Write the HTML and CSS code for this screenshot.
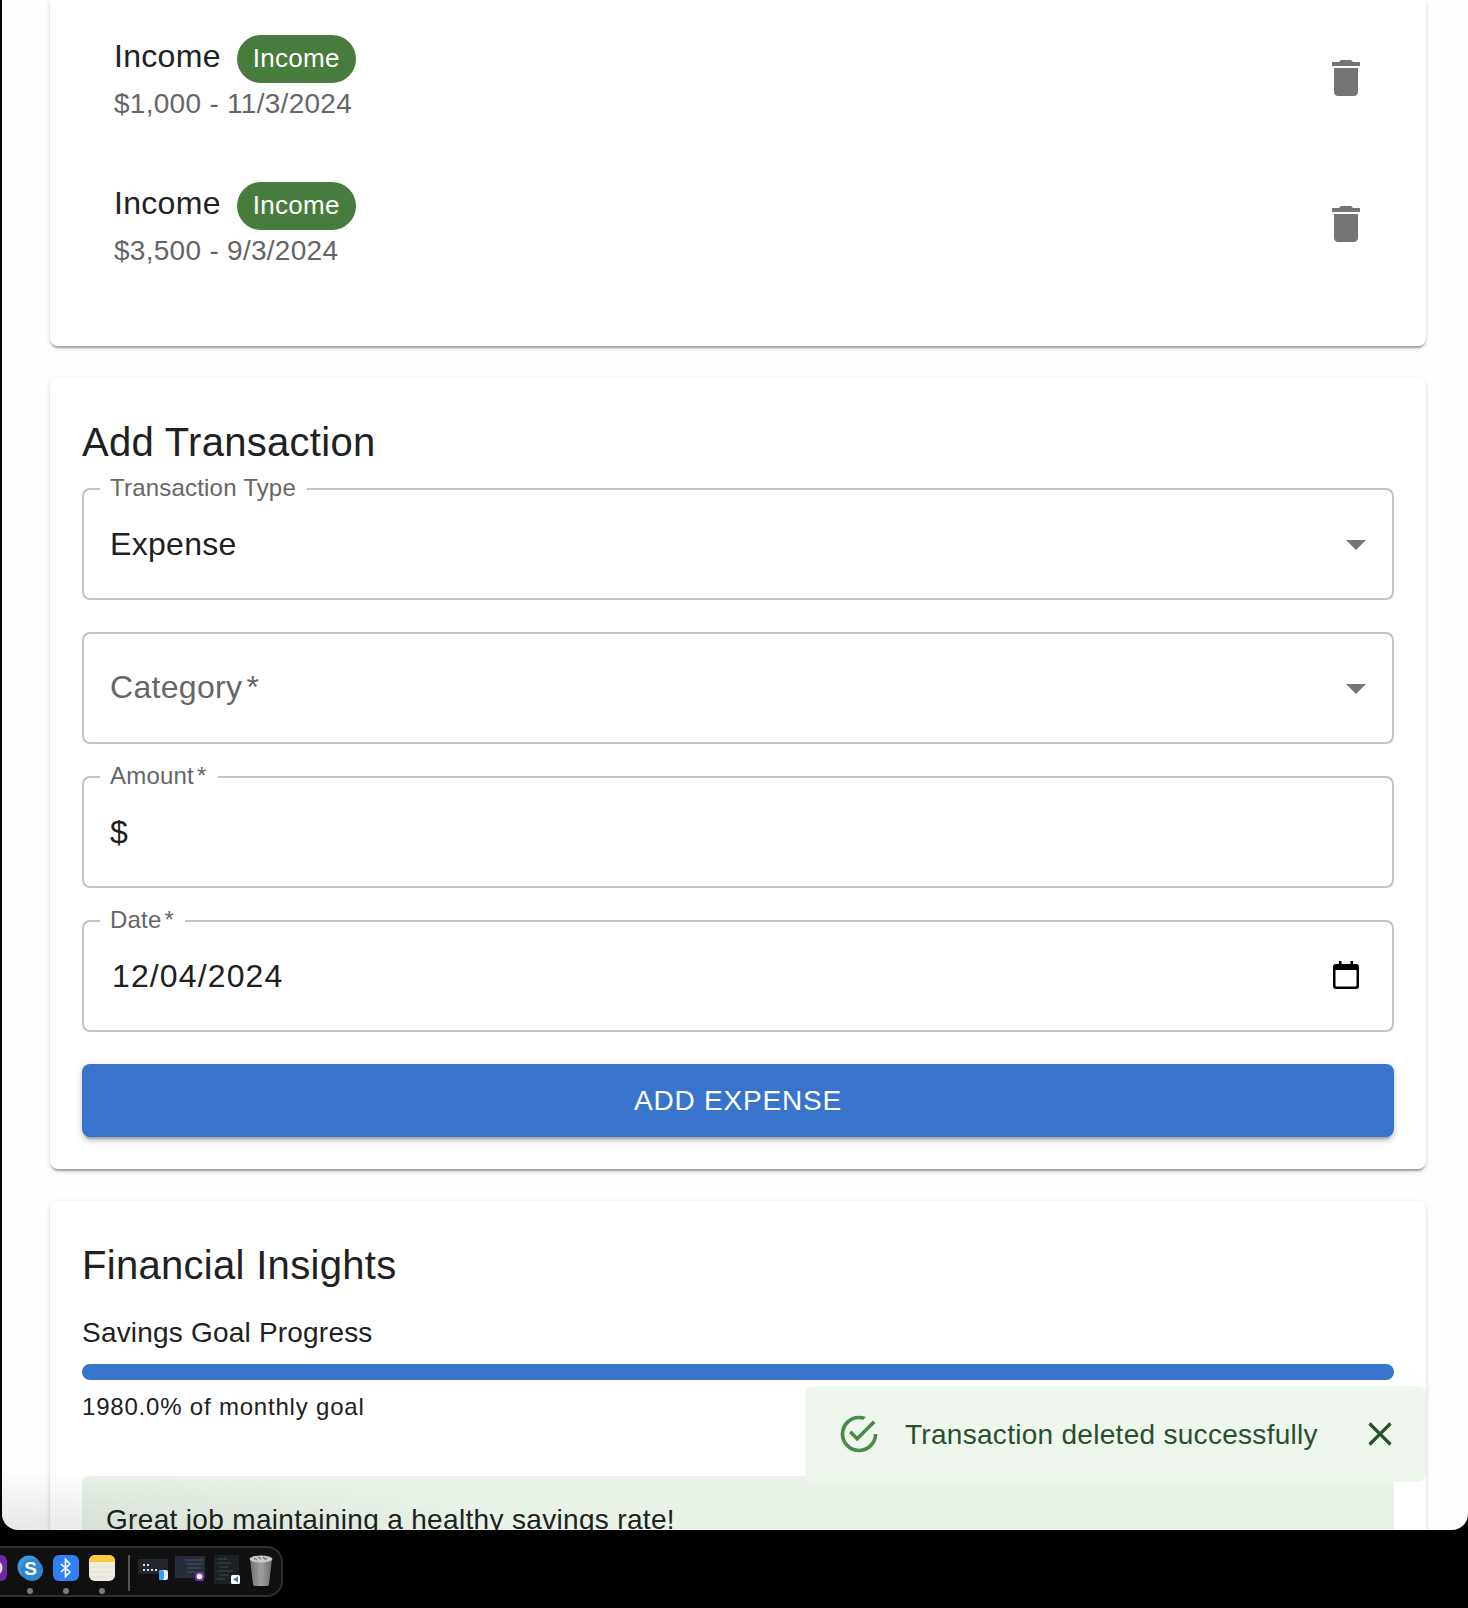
FILE: index.html
```html
<!DOCTYPE html>
<html lang="en">
<head>
    <meta charset="UTF-8">
    <title>Budget</title>
    <link rel="stylesheet" href="styles.css">
</head>
<body>
<div class="window">
    <div class="content">
        <div class="card list-card">
            <div class="item">
                <div class="item-text">
                    <div class="item-title">
                        <span class="item-name">Income</span>
                        <span class="chip">Income</span>
                    </div>
                    <div class="item-sub">$1,000 - 11/3/2024</div>
                </div>
                <svg class="icon-lg trash" viewBox="0 0 24 24"><path d="M6 19c0 1.1.9 2 2 2h8c1.1 0 2-.9 2-2V7H6v12zM19 4h-3.5l-1-1h-5l-1 1H5v2h14V4z"/></svg>
            </div>
            <div class="item">
                <div class="item-text">
                    <div class="item-title">
                        <span class="item-name">Income</span>
                        <span class="chip">Income</span>
                    </div>
                    <div class="item-sub">$3,500 - 9/3/2024</div>
                </div>
                <svg class="icon-lg trash" viewBox="0 0 24 24"><path d="M6 19c0 1.1.9 2 2 2h8c1.1 0 2-.9 2-2V7H6v12zM19 4h-3.5l-1-1h-5l-1 1H5v2h14V4z"/></svg>
            </div>
        </div>

        <div class="card">
            <h2 class="card-title form-title">Add Transaction</h2>
            <div class="form">
                <div class="field">
                    <span class="field-label">Transaction Type</span>
                    <span class="field-value">Expense</span>
                    <svg class="icon-lg arrow" viewBox="0 0 24 24"><path d="M7 10l5 5 5-5z"/></svg>
                </div>
                <div class="field">
                    <span class="field-value placeholder">Category<span class="req">*</span></span>
                    <svg class="icon-lg arrow" viewBox="0 0 24 24"><path d="M7 10l5 5 5-5z"/></svg>
                </div>
                <div class="field">
                    <span class="field-label">Amount<span class="req">*</span></span>
                    <span class="field-value">$</span>
                </div>
                <div class="field">
                    <span class="field-label">Date<span class="req">*</span></span>
                    <span class="field-value date-value">12/04/2024</span>
                    <svg class="calendar" viewBox="0 0 26 28"><path d="M6 0h2.5v3h9V0H20v3h3a3 3 0 0 1 3 3v19a3 3 0 0 1-3 3H3a3 3 0 0 1-3-3V6a3 3 0 0 1 3-3h3zM2.500 9v15.500a1 1 0 0 0 1 1h19a1 1 0 0 0 1-1V9z" fill-rule="evenodd"/></svg>
                </div>
            </div>
            <div class="add-btn">ADD EXPENSE</div>
        </div>

        <div class="card">
            <h2 class="card-title">Financial Insights</h2>
            <div class="goal-title">Savings Goal Progress</div>
            <div class="progress"></div>
            <div class="goal-note">1980.0% of monthly goal</div>
            <div class="notice">Great job maintaining a healthy savings rate!</div>
        </div>
    </div>

    <div class="toast">
        <svg class="toast-icon" viewBox="0 0 24 24"><path d="M20 12a8 8 0 0 1-8 8 8 8 0 0 1-8-8 8 8 0 0 1 8-8c.76 0 1.5.11 2.2.31l1.57-1.57A9.800 9.800 0 0 0 12 2 10 10 0 0 0 2 12a10 10 0 0 0 10 10 10 10 0 0 0 10-10M7.910 10.080 6.500 11.500 11 16 21 6l-1.410-1.420L11 13.170l-3.090-3.090z"/></svg>
        <span class="toast-text">Transaction deleted successfully</span>
        <svg class="toast-close" viewBox="0 0 24 24"><path d="M19 6.410 17.590 5 12 10.590 6.410 5 5 6.410 10.590 12 5 17.590 6.410 19 12 13.410 17.590 19 19 17.590 13.410 12z"/></svg>
    </div>
</div>

<div class="dock-area">
    <div class="dock">
        <div class="dock-app">
            <svg viewBox="0 0 26 26"><rect width="26" height="26" rx="6" fill="#6a2c9c"/><circle cx="13" cy="13" r="7" fill="none" stroke="#e9ddf3" stroke-width="3"/></svg>
        </div>
        <div class="dock-app running">
            <svg viewBox="0 0 26 26"><circle cx="12" cy="12" r="11.500" fill="#4197dc"/><circle cx="15" cy="15" r="11" fill="#2f86cd"/><text x="13.500" y="20" class="skype-s">S</text></svg>
        </div>
        <div class="dock-app running">
            <svg viewBox="0 0 26 26"><rect width="26" height="26" rx="6" fill="#2f80f2"/><path d="M8 9l9 8-4.500 4.500V4.500L17 9l-9 8" fill="none" stroke="#fff" stroke-width="1.600"/></svg>
        </div>
        <div class="dock-app running">
            <svg viewBox="0 0 26 26"><rect width="26" height="26" rx="6" fill="#efece4"/><path d="M0 7V6a6 6 0 0 1 6-6h14a6 6 0 0 1 6 6v1z" fill="#f9cb43"/><path d="M0 12h26M0 17h26M0 22h26" stroke="#dedad0" stroke-width=".7"/></svg>
        </div>
        <div class="dock-sep"></div>
        <svg class="dock-thumb" width="30" height="30" viewBox="0 0 30 30">
            <rect y="4" width="30" height="15" fill="#23262a"/>
            <path d="M5 9h2v2H5zM9 9h2v2H9zM5 14h2v2H5zM9 14h2v2H9zM13 14h2v2h-2zM17 14h2v2h-2z" fill="#cfe3f2"/>
            <rect x="21" y="15" width="9" height="10" rx="2" fill="#dfeefa"/><rect x="21" y="15" width="5" height="10" rx="2" fill="#3f9cf0"/>
        </svg>
        <svg class="dock-thumb" width="30" height="30" viewBox="0 0 30 30">
            <rect y="1" width="30" height="22" fill="#272d38"/>
            <path d="M10 5h18M12 9h16M12 13h14M12 17h8" stroke="#46586c" stroke-width="1"/>
            <rect x="20" y="17" width="9" height="9" rx="2" fill="#6a35b5"/><circle cx="24.500" cy="21.500" r="2.800" fill="#fff"/>
        </svg>
        <svg class="dock-thumb wide-gap" width="26" height="30" viewBox="0 0 26 30">
            <rect width="25" height="29" fill="#1c2125"/>
            <path d="M3 4h10M3 8h14M5 12h9M3 16h16M5 20h10M3 24h8" stroke="#3c5046" stroke-width="1"/>
            <rect x="17" y="20" width="9" height="9" rx="1.500" fill="#fff"/><path d="M24 21.500v6l-5-3z" fill="#2a7fd0"/>
        </svg>
        <svg class="dock-thumb wide-gap" width="24" height="31" viewBox="0 0 24 31">
            <defs>
                <linearGradient id="binGlass" x1="0" x2="1" y1="0" y2="0">
                    <stop offset="0" stop-color="#6f6f6f"/>
                    <stop offset=".5" stop-color="#a4a4a4"/>
                    <stop offset="1" stop-color="#6a6a6a"/>
                </linearGradient>
            </defs>
            <path d="M1 4h22l-3 25a2 2 0 0 1-2 2H6a2 2 0 0 1-2-2z" fill="url(#binGlass)"/>
            <ellipse cx="12" cy="4" rx="11.500" ry="3.500" fill="#c9c9c9"/>
            <path d="M5 3l3 2M9 2l3 2" stroke="#6f7f8f" stroke-width="1.500"/>
            <path d="M14 2l2 2M18 3l-2 2" stroke="#a8705c" stroke-width="1.500"/>
            <path d="M8 9l1 19M12 9v19M16 9l-1 19" stroke="#8c8c8c" stroke-width=".8"/>
        </svg>
    </div>
</div>
</body>
</html>
```

FILE: styles.css
```css
* {
    margin: 0;
    padding: 0;
    box-sizing: border-box;
}

html, body {
    height: 1608px;
    overflow: hidden;
}

body {
    background: #000;
    font-family: "Liberation Sans", Arial, sans-serif;
    color: #212121;
}

.window {
    height: 1530px;
    margin-left: 2px;
    background: #fefefe;
    border-radius: 0 0 16px 16px;
    overflow: hidden;
    position: relative;
}

/* dock haze at lower left */
.window::after {
    content: "";
    position: absolute;
    left: 0;
    bottom: 0;
    width: 520px;
    height: 62px;
    background: radial-gradient(ellipse at 0 100%, rgba(0, 0, 0, .09), rgba(0, 0, 0, 0) 70%);
    pointer-events: none;
}

.content {
    display: flex;
    flex-direction: column;
    gap: 32px;
    padding: 0 42px 0 48px;
}

.card {
    flex-shrink: 0;
    background: #fff;
    border-radius: 8px;
    padding: 32px;
    box-shadow: 0 4px 2px -2px rgba(0, 0, 0, .2), 0 2px 2px rgba(0, 0, 0, .14), 0 2px 6px rgba(0, 0, 0, .12);
}

.list-card {
    border-radius: 0 0 8px 8px;
    padding: 6px 0 47px 64px;
}

.item {
    height: 146.700px;
    padding-right: 56px;
    display: flex;
    align-items: center;
    justify-content: space-between;
}

.item-title {
    display: flex;
    align-items: center;
    gap: 16px;
    height: 48px;
}

.item-name {
    font-size: 32px;
    letter-spacing: .3px;
    margin-top: -5px;
}

.chip {
    height: 48px;
    line-height: 46px;
    padding: 0 16px;
    border-radius: 24px;
    background: #477d3c;
    color: #fff;
    font-size: 26px;
    letter-spacing: .3px;
}

.item-sub {
    font-size: 28px;
    line-height: 40px;
    color: #666;
    letter-spacing: .28px;
    padding-top: 1px;
    margin-bottom: -1px;
}

.icon-lg {
    width: 48px;
    height: 48px;
    fill: #757575;
    flex-shrink: 0;
}

.trash {
    margin-bottom: 3px;
}

.item + .item .trash {
    margin-bottom: 4px;
}

.card-title {
    font-size: 40px;
    font-weight: 400;
    line-height: 64px;
    letter-spacing: .3px;
}

.form-title {
    margin-bottom: 14px;
}

.form {
    display: flex;
    flex-direction: column;
    gap: 32px;
}

.field {
    height: 112px;
    border: 2px solid #c4c4c4;
    border-radius: 8px;
    padding: 0 12px 0 26px;
    display: flex;
    align-items: center;
    justify-content: space-between;
    position: relative;
}

.field-label {
    position: absolute;
    left: 16px;
    top: -16px;
    padding: 0 11px 0 10px;
    background: #fff;
    color: #666;
    font-size: 24px;
    line-height: 28px;
    letter-spacing: .2px;
}

.field-value {
    font-size: 32px;
    letter-spacing: .3px;
}

.req {
    margin-left: .13em;
}

.placeholder {
    color: #666;
    margin-top: -2px;
}

.date-value {
    padding-left: 2px;
    letter-spacing: 1.130px;
}

.calendar {
    width: 26px;
    height: 28px;
    margin-right: 21px;
    margin-top: -2px;
}

.add-btn {
    margin-top: 32px;
    height: 73px;
    line-height: 73px;
    border-radius: 8px;
    background: #3874cb;
    color: #fff;
    font-size: 28px;
    text-align: center;
    letter-spacing: .8px;
    box-shadow: 0 6px 2px -4px rgba(0, 0, 0, .2), 0 4px 4px rgba(0, 0, 0, .14), 0 2px 10px rgba(0, 0, 0, .12);
}

.goal-title {
    margin-top: 16px;
    font-size: 28px;
    line-height: 40px;
    letter-spacing: .2px;
}

.progress {
    margin-top: 11px;
    height: 16px;
    border-radius: 8px;
    background: #3874cb;
}

.goal-note {
    margin-top: 7px;
    font-size: 24px;
    line-height: 40px;
    letter-spacing: .8px;
}

.notice {
    margin-top: 49px;
    padding: 24px 24px;
    border-radius: 8px;
    background: #e9f3e8;
    font-size: 28px;
    line-height: 40px;
    letter-spacing: .33px;
}

.toast {
    position: absolute;
    right: 42px;
    bottom: 48px;
    width: 621px;
    height: 96px;
    padding: 0 32px;
    border-radius: 8px;
    background: #eff6ee;
    color: #2a4f2c;
    display: flex;
    align-items: center;
    z-index: 2;
}

.toast-icon {
    width: 44px;
    height: 44px;
    fill: #4c8a49;
    flex-shrink: 0;
    margin-right: 24px;
}

.toast-text {
    font-size: 28px;
    letter-spacing: .29px;
    flex: 1;
    margin-top: 2px;
}

.toast-close {
    width: 40px;
    height: 40px;
    fill: #2a4f2c;
    margin-right: -6px;
}

.dock-area {
    height: 78px;
    padding-top: 16px;
    overflow: hidden;
}

.dock {
    width: 306px;
    height: 51px;
    margin-left: -23px;
    padding-left: 2px;
    border: 2px solid #2e2e2e;
    border-radius: 16px;
    background: #101010;
    display: flex;
    align-items: flex-start;
    gap: 10px;
    padding-top: 7px;
}

.dock-app {
    width: 26px;
    height: 26px;
    flex-shrink: 0;
    position: relative;
}

.dock-app svg {
    display: block;
}

.running::after {
    content: "";
    position: absolute;
    left: 10px;
    top: 33px;
    width: 6px;
    height: 6px;
    border-radius: 50%;
    background: #7a7a7a;
}

.skype-s {
    fill: #fff;
    font-family: "Liberation Sans", Arial, sans-serif;
    font-size: 19px;
    font-weight: 700;
    text-anchor: middle;
}

.dock-sep {
    width: 2px;
    height: 36px;
    margin: 0 1px 0 3px;
    background: #555;
    flex-shrink: 0;
}

.dock-thumb {
    flex-shrink: 0;
    margin-left: -3px;
}

.wide-gap {
    margin-left: -1px;
}
```
